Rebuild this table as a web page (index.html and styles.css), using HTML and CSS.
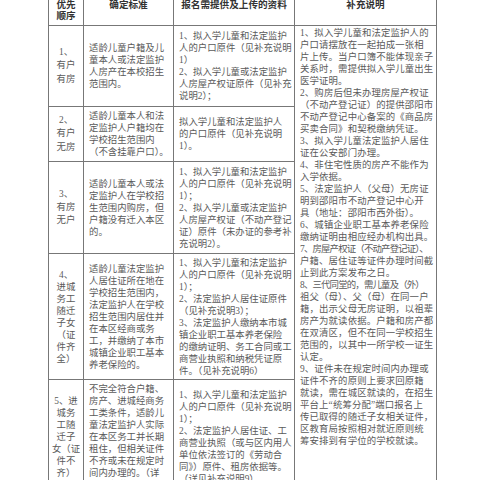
FILE: index.html
```html
<!DOCTYPE html>
<html lang="zh-CN">
<head>
<meta charset="utf-8">
<title>招生对象优先顺序</title>
<link rel="stylesheet" href="styles.css">
</head>
<body>
<table class="sheet">
  <colgroup>
    <col class="w-no">
    <col class="w-std">
    <col class="w-doc">
    <col class="w-note">
  </colgroup>
  <thead>
    <tr class="r-head">
      <th>优先<br>顺序</th>
      <th>确定标准</th>
      <th>报名需提供及上传的资料</th>
      <th>补充说明</th>
    </tr>
  </thead>
  <tbody>
    <tr class="r1">
      <td class="c-no loose">1、<br>有户<br>有房</td>
      <td>适龄儿童户籍及儿<br>童本人或法定监护<br>人房产在本校招生<br>范围内。</td>
      <td>1、拟入学儿童和法定监护<br>人的户口原件（见补充说明<br>1）<br>2、拟入学儿童或法定监护<br>人房屋产权证原件（见补充<br>说明2）；</td>
      <td class="c-note" rowspan="5">1、拟入学儿童和法定监护人的<br>户口请摆放在一起拍成一张相<br>片上传。当户口簿不能体现亲子<br>关系时，需提供拟入学儿童出生<br>医学证明。<br>2、购房后但未办理房屋产权证<br>（不动产登记证）的提供邵阳市<br>不动产登记中心备案的《商品房<br>买卖合同》和契税缴纳凭证。<br>3、拟入学儿童法定监护人居住<br>证在公安部门办理。<br>4、非住宅性质的房产不能作为<br>入学依据。<br>5、法定监护人（父母）无房证<br>明到邵阳市不动产登记中心开<br>具（地址：邵阳市西外街）。<br>6、城镇企业职工基本养老保险<br>缴纳证明由相应经办机构出具。<br><span class="tight">7、房屋产权证（不动产登记证）、</span><br>户籍、居住证等证件办理时间截<br>止到此方案发布之日。<br><span class="tight">8、三代同堂的，需儿童及（外）</span><br>祖父（母）、父（母）在同一户<br>籍，出示父母无房证明，以祖辈<br>房产为就读依据。户籍和房产都<br>在双清区，但不在同一学校招生<br>范围的，以其中一所学校一证生<br>认定。<br>9、证件未在规定时间内办理或<br>证件不齐的原则上要求回原籍<br>就读，需在城区就读的，在招生<br>平台上“统筹分配”端口报名上<br>传已取得的随迁子女相关证件，<br>区教育局按照相对就近原则统<br>筹安排到有学位的学校就读。</td>
    </tr>
    <tr class="r2">
      <td class="c-no loose">2、<br>有户<br>无房</td>
      <td>适龄儿童本人和法<br>定监护人户籍均在<br>学校招生范围内<br>（不含挂靠户口）。</td>
      <td>拟入学儿童和法定监护人<br>的户口原件（见补充说明<br>1）。</td>
    </tr>
    <tr class="r3">
      <td class="c-no loose">3、<br>有房<br>无户</td>
      <td>适龄儿童本人或法<br>定监护人在学校招<br>生范围内购房，但<br>户籍没有迁入本区<br>的。</td>
      <td>1、拟入学儿童和法定监护<br>人的户口原件（见补充说明<br>1）；<br>2、拟入学儿童或法定监护<br>人房屋产权证（不动产登记<br>证）原件（未办证的参考补<br>充说明2）。</td>
    </tr>
    <tr class="r4">
      <td class="c-no">4、<br>进城<br>务工<br>随迁<br>子女<br>（证<br>件齐<br>全）</td>
      <td>适龄儿童法定监护<br>人居住证所在地在<br>学校招生范围内，<br>法定监护人在学校<br>招生范围内居住并<br>在本区经商或务<br>工，并缴纳了本市<br>城镇企业职工基本<br>养老保险的。</td>
      <td>1、拟入学儿童和法定监护<br>人的户口原件（见补充说明<br>1）；<br>2、法定监护人居住证原件<br>（见补充说明3）；<br>3、法定监护人缴纳本市城<br>镇企业职工基本养老保险<br>的缴纳证明、务工合同或工<br>商营业执照和纳税凭证原<br>件。（见补充说明6）</td>
    </tr>
    <tr class="r5">
      <td class="c-no">5、进<br>城务<br>工随<br>迁子<br>女（证<br>件不<br>齐）</td>
      <td>不完全符合户籍、<br>房产、进城经商务<br>工类条件，适龄儿<br>童法定监护人实际<br>在本区务工并长期<br>租住，但相关证件<br>不齐或未在规定时<br>间内办理的。（详<br>见补充说明9）</td>
      <td>1、拟入学儿童和法定监护<br>人的户口原件（见补充说明<br>1）；<br>2、法定监护人居住证、工<br>商营业执照（或与区内用人<br>单位依法签订的《劳动合<br>同》）原件、租房依据等。<br>（详见补充说明9）</td>
    </tr>
  </tbody>
</table>
</body>
</html>
```
FILE: styles.css
```css
* { box-sizing: border-box; }
html, body { margin: 0; padding: 0; background: #fff; }
body {
  font-family: "Liberation Serif", "Noto Sans CJK SC", serif;
  font-size: 9.4px;
  line-height: 12px;
  color: #5a5a5a;
  overflow: hidden;
}
.sheet {
  border-collapse: collapse;
  table-layout: fixed;
  width: 389px;
  margin: -14px 0 0 48px;
}
.w-no { width: 35px; }
.w-std { width: 90px; }
.w-doc { width: 121px; }
.w-note { width: 142px; }
.sheet th,
.sheet td {
  border: 1px solid #777;
  padding: 0 3px 0 5px;
  white-space: nowrap;
  vertical-align: middle;
  text-align: left;
  overflow: hidden;
}
.sheet th {
  font-size: 9.6px;
  line-height: 11px;
  font-weight: 700;
  color: #333;
  text-align: center;
  vertical-align: top;
  padding: 12px 0 0;
}
.r-head { height: 39px; }
.r1 { height: 81px; }
.r2 { height: 55px; }
.r3 { height: 92px; }
.r4 { height: 126px; }
.r5 { height: 114px; }
.sheet .c-no { text-align: center; padding: 0; }
.loose { line-height: 13.3px; }
.sheet .c-note {
  vertical-align: top;
  padding: 1px 2px 0 5px;
  letter-spacing: 0.15px;
}
.tight { letter-spacing: -0.8px; }
```
